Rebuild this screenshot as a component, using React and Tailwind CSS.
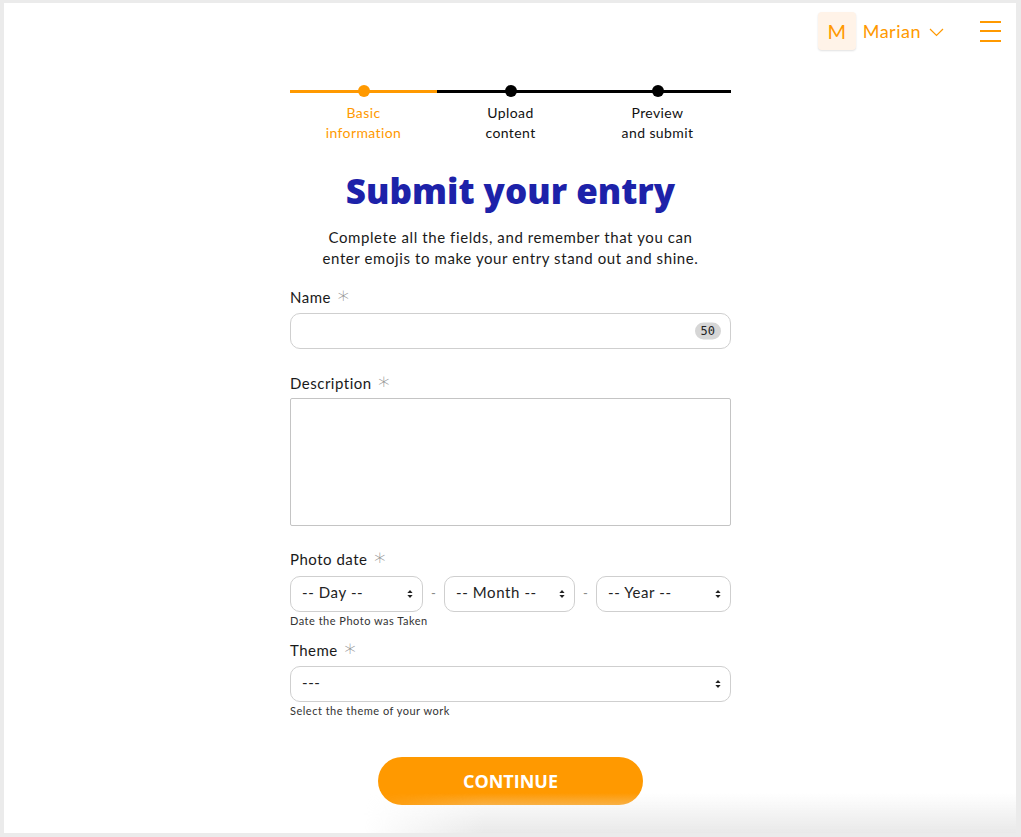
import React from "react";

const body = { fontFamily: "Lato, 'Open Sans', sans-serif" };

function Star() {
  return (
    <span
      className="ml-[5px] h-[20px] text-[23px] leading-[20px] text-[#8f8f8f] relative top-[-2px]"
      style={{ fontFamily: "'DejaVu Sans', sans-serif", fontWeight: 200 }}
    >
      ∗
    </span>
  );
}

function Arrows() {
  return (
    <svg width="6" height="9" viewBox="0 0 6 9" className="absolute right-[10px] top-1/2 -translate-y-1/2 pointer-events-none">
      <path d="M3 0.5 L5.6 3.6 H0.4 Z" fill="#222" />
      <path d="M3 8.5 L5.6 5.4 H0.4 Z" fill="#222" />
    </svg>
  );
}

function Select({ value, className = "" }) {
  return (
    <div className={`relative ${className}`}>
      <div className="h-[36px] rounded-[10px] border border-[#cfcfcf] bg-white pl-[11px] pb-[3px] flex items-center text-[15px] tracking-[0.6px] text-[#222]">
        {value}
      </div>
      <Arrows />
    </div>
  );
}

function Step({ label1, label2, line, dot, text }) {
  return (
    <div className="flex flex-col items-center">
      <div className="relative flex h-3 w-full items-center justify-center">
        <div className={`absolute inset-x-0 h-[3px] ${line}`} />
        <div className={`relative h-3 w-3 rounded-full ${dot}`} />
      </div>
      <div className={`mt-[6px] text-center text-[14px] leading-[20px] tracking-[0.4px] ${text}`}>
        {label1}
        <br />
        {label2}
      </div>
    </div>
  );
}

const labelCls = "flex h-[20px] items-center overflow-visible text-[15px] leading-[20px] tracking-[0.5px] text-[#1a1a1a]";

export default function App() {
  return (
    <div className="min-h-screen bg-[#ebebeb] pl-[4px] pt-[3px] pr-[5px] pb-[4px]" style={body}>
      <div className="relative h-[830px] overflow-hidden bg-white">
        {/* header */}
        <div className="flex items-center justify-end pt-[9px] pr-[15px]">
          <div className="flex h-[38px] w-[38px] items-center justify-center rounded-[4px] bg-[#fff3e8] text-[20px] text-[#ff9900] shadow-[0_1px_2px_rgba(0,0,0,0.12)]">
            M
          </div>
          <span className="ml-[7px] text-[18px] tracking-[0.5px] text-[#ff9900]">Marian</span>
          <svg width="15" height="9" viewBox="0 0 15 9" className="ml-[8px] mt-[2px]">
            <polyline points="1,1 7.5,7.5 14,1" fill="none" stroke="#ff9900" strokeWidth="1.2" />
          </svg>
          <div className="ml-[36px] flex w-[21px] flex-col gap-[7.5px]">
            <div className="h-[2px] bg-[#ff9900]" />
            <div className="h-[2px] bg-[#ff9900]" />
            <div className="h-[2px] bg-[#ff9900]" />
          </div>
        </div>

        <div className="mx-auto w-[442px] pl-[1px]">
          {/* stepper */}
          <div className="mt-[35px] grid grid-cols-3">
            <Step label1="Basic" label2="information" line="bg-[#ff9900]" dot="bg-[#ff9900]" text="text-[#ff9900]" />
            <Step label1="Upload" label2="content" line="bg-black" dot="bg-black" text="text-[#111]" />
            <Step label1="Preview" label2="and submit" line="bg-black" dot="bg-black" text="text-[#111]" />
          </div>

          <h1
            className="mt-[28px] text-center text-[35px] font-extrabold leading-[40px] text-[#1d22a9]"
            style={{ fontFamily: "'Open Sans', sans-serif" }}
          >
            Submit your entry
          </h1>
          <p className="mt-[16px] text-center text-[15px] leading-[21px] tracking-[0.6px] text-[#1a1a1a]">
            Complete all the fields, and remember that you can
            <br />
            enter emojis to make your entry stand out and shine.
          </p>

          {/* Name */}
          <label className={`mt-[18px] ${labelCls}`}>
            Name <Star />
          </label>
          <div className="relative mt-[6px] h-[36px] rounded-[10px] border border-[#cfcfcf]">
            <span
              className="absolute right-[9px] top-1/2 -translate-y-1/2 rounded-full bg-[#d6d6d6] px-[6px] text-[12px] leading-[17px] text-[#222]"
              style={{ fontFamily: "'DejaVu Sans Mono', monospace" }}
            >
              50
            </span>
          </div>

          {/* Description */}
          <label className={`mt-[24px] ${labelCls}`}>
            Description <Star />
          </label>
          <div className="mt-[5px] h-[128px] rounded-[2px] border border-[#c4c4c4]" />

          {/* Photo date */}
          <label className={`mt-[23px] ${labelCls}`}>
            Photo date <Star />
          </label>
          <div className="mt-[7px] flex items-center">
            <Select value="-- Day --" className="w-[133px]" />
            <span className="w-[21px] text-center text-[13px] text-[#888]">-</span>
            <Select value="-- Month --" className="w-[131px]" />
            <span className="w-[21px] text-center text-[13px] text-[#888]">-</span>
            <Select value="-- Year --" className="flex-1" />
          </div>
          <p className="mt-[2px] text-[11px] leading-[14px] tracking-[0.5px] text-[#333]">Date the Photo was Taken</p>

          {/* Theme */}
          <label className={`mt-[12px] ${labelCls}`}>
            Theme <Star />
          </label>
          <Select value="---" className="mt-[6px]" />
          <p className="mt-[2px] text-[11px] leading-[14px] tracking-[0.5px] text-[#333]">Select the theme of your work</p>

          <div className="mt-[39px] flex justify-center">
            <button
              className="h-[48px] w-[265px] rounded-full bg-[#ff9900] text-[18px] font-bold uppercase text-white"
              style={{ fontFamily: "'Open Sans', sans-serif" }}
            >
              Continue
            </button>
          </div>
        </div>

        <div className="pointer-events-none absolute bottom-0 left-[360px] right-0 h-[40px] bg-linear-to-b from-transparent to-[#e9e9e9] [mask-image:linear-gradient(to_right,transparent,black_120px)]" />
      </div>
    </div>
  );
}
